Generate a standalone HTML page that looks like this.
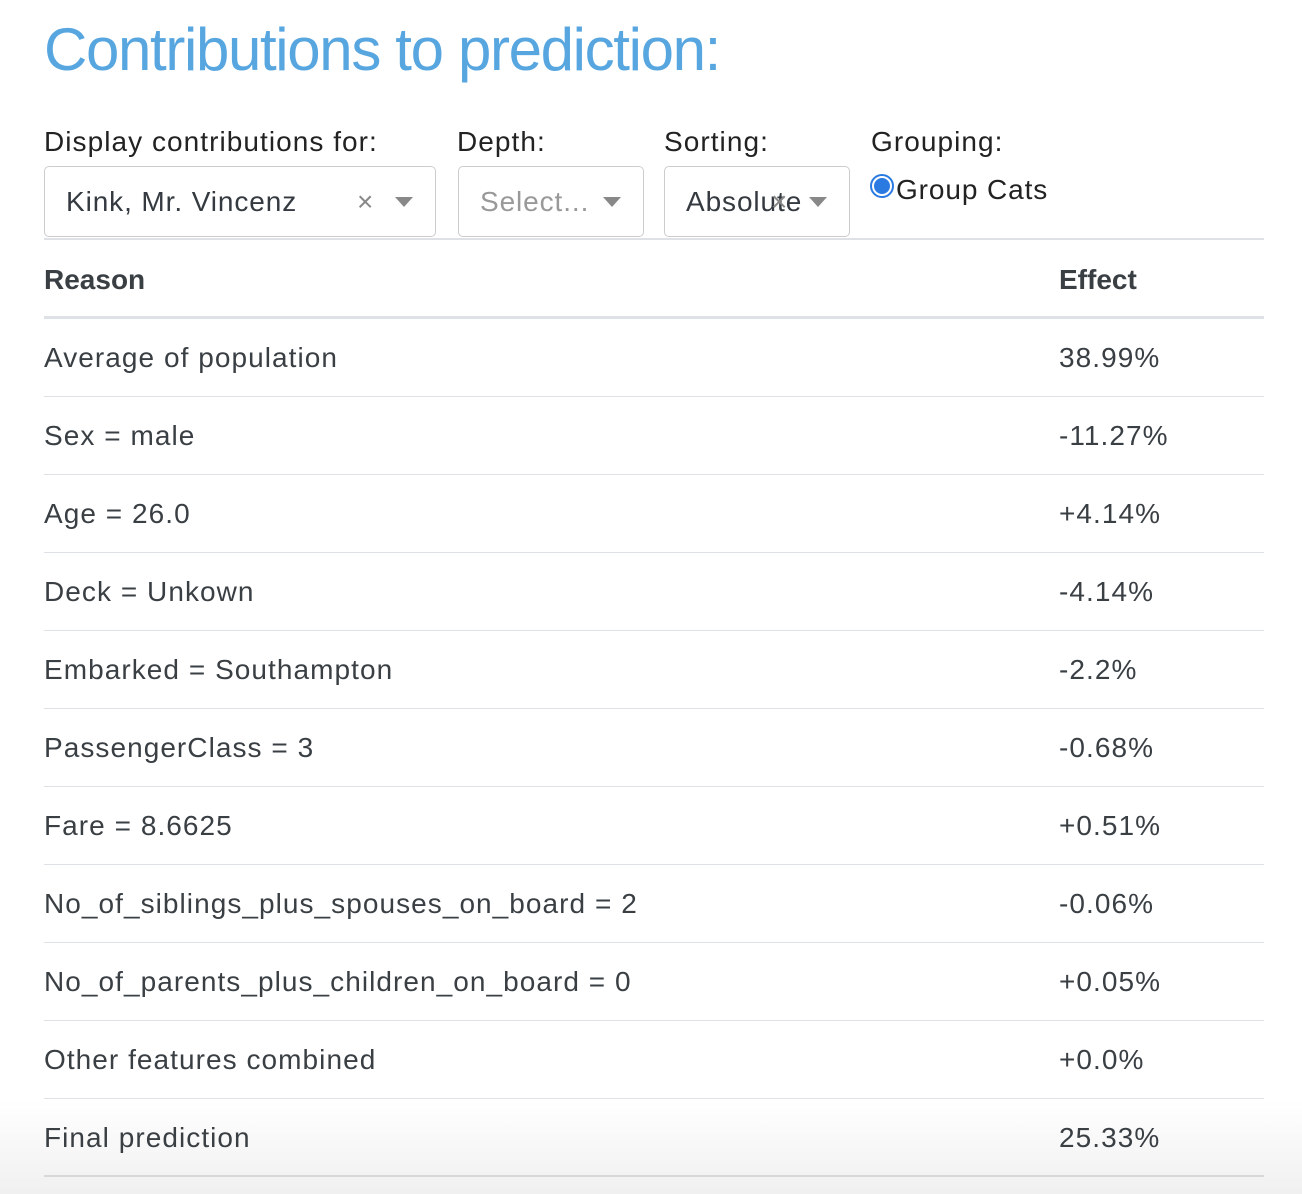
<!DOCTYPE html>
<html><head><meta charset="utf-8"><style>
body{margin:0;background:#fff;font-family:"Liberation Sans",Arial,sans-serif;color:#343a40;width:1302px;height:1194px;overflow:hidden;position:relative}
.t{position:absolute;left:44px;top:15px;font-size:60px;color:#57a6e0;letter-spacing:-1.35px;white-space:nowrap}
.lbl{position:absolute;top:126px;font-size:28px;color:#222;letter-spacing:1.05px}
.box{position:absolute;top:166px;height:71px;border:1px solid #ccc;border-radius:5px;box-sizing:border-box;font-size:28px;letter-spacing:0.9px}
.box span{position:absolute;top:19px;left:21px}
.arr{position:absolute;top:30px;width:0;height:0;border-left:9px solid transparent;border-right:9px solid transparent;border-top:10px solid #888}
.x{position:absolute;top:19px;color:#888;font-size:28px}
.line{position:absolute;left:44px;width:1220px;background:#dee2e6}
.row{position:absolute;left:44px;font-size:28px;color:#3a3f44;letter-spacing:1.05px}
.eff{position:absolute;left:1059px;font-size:28px;color:#3a3f44;letter-spacing:1.05px}
</style></head><body>
<div class="t">Contributions to prediction:</div>
<div class="lbl" style="left:44px">Display contributions for:</div>
<div class="lbl" style="left:457px">Depth:</div>
<div class="lbl" style="left:664px">Sorting:</div>
<div class="lbl" style="left:871px">Grouping:</div>
<div class="box" style="left:44px;width:392px"><span>Kink, Mr. Vincenz</span><div class="x" style="left:312px">×</div><div class="arr" style="left:350px"></div></div>
<div class="box" style="left:458px;width:186px"><span style="color:#999">Select...</span><div class="arr" style="left:144px"></div></div>
<div class="box" style="left:664px;width:186px"><span>Absolute</span><div class="x" style="left:106px">×</div><div class="arr" style="left:144px"></div></div>
<div style="position:absolute;left:870px;top:174px;width:24px;height:24px;border-radius:50%;border:2px solid #2a7ae2;box-sizing:border-box;background:#fff"><div style="position:absolute;left:2px;top:2px;width:16px;height:16px;border-radius:50%;background:#2a7ae2"></div></div>
<div style="position:absolute;left:896px;top:174px;font-size:28px;color:#222;letter-spacing:0.9px">Group Cats</div>
<div class="line" style="top:238px;height:2px"></div>
<div class="row" style="top:264px;font-weight:bold;letter-spacing:0">Reason</div>
<div class="eff" style="top:264px;font-weight:bold;letter-spacing:0">Effect</div>
<div class="line" style="top:316px;height:3px"></div>
<div class="row" style="top:342px">Average of population</div><div class="eff" style="top:342px">38.99%</div>
<div class="line" style="top:396px;height:1px"></div>
<div class="row" style="top:420px">Sex = male</div><div class="eff" style="top:420px">-11.27%</div>
<div class="line" style="top:474px;height:1px"></div>
<div class="row" style="top:498px">Age = 26.0</div><div class="eff" style="top:498px">+4.14%</div>
<div class="line" style="top:552px;height:1px"></div>
<div class="row" style="top:576px">Deck = Unkown</div><div class="eff" style="top:576px">-4.14%</div>
<div class="line" style="top:630px;height:1px"></div>
<div class="row" style="top:654px">Embarked = Southampton</div><div class="eff" style="top:654px">-2.2%</div>
<div class="line" style="top:708px;height:1px"></div>
<div class="row" style="top:732px">PassengerClass = 3</div><div class="eff" style="top:732px">-0.68%</div>
<div class="line" style="top:786px;height:1px"></div>
<div class="row" style="top:810px">Fare = 8.6625</div><div class="eff" style="top:810px">+0.51%</div>
<div class="line" style="top:864px;height:1px"></div>
<div class="row" style="top:888px">No_of_siblings_plus_spouses_on_board = 2</div><div class="eff" style="top:888px">-0.06%</div>
<div class="line" style="top:942px;height:1px"></div>
<div class="row" style="top:966px">No_of_parents_plus_children_on_board = 0</div><div class="eff" style="top:966px">+0.05%</div>
<div class="line" style="top:1020px;height:1px"></div>
<div class="row" style="top:1044px">Other features combined</div><div class="eff" style="top:1044px">+0.0%</div>
<div class="line" style="top:1098px;height:1px"></div>
<div style="position:absolute;left:0;top:1100px;width:1302px;height:94px;background:linear-gradient(#fff,#f0f0f0)"></div>
<div class="row" style="top:1122px">Final prediction</div><div class="eff" style="top:1122px">25.33%</div>
<div class="line" style="top:1175px;height:2px;background:#d8d8d8"></div>
</body></html>
